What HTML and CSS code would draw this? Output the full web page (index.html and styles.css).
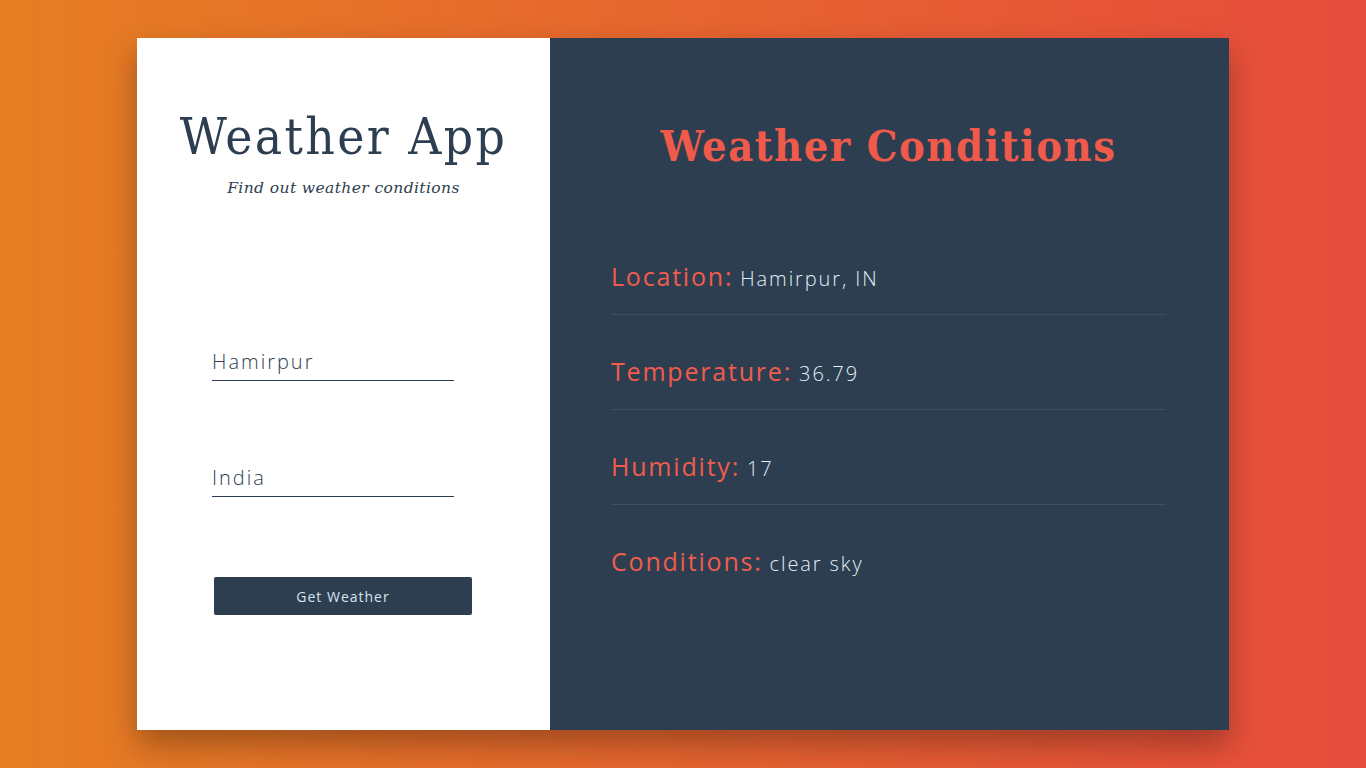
FILE: index.html
```html
<!DOCTYPE html>
<html>
<head>
<meta charset="utf-8">
<link rel="stylesheet" href="styles.css">
</head>
<body>
<div class="card">
  <section class="side">
    <h1 class="app-title">Weather App</h1>
    <p class="app-sub">Find out weather conditions</p>
    <form class="form">
      <div class="field"><span class="field-text">Hamirpur</span></div>
      <div class="field"><span class="field-text">India</span></div>
      <button type="button" class="btn">Get Weather</button>
    </form>
  </section>
  <section class="main">
    <h2 class="main-title">Weather Conditions</h2>
    <div class="rows">
      <div class="row"><span class="label">Location:</span><span class="value">Hamirpur, IN</span></div>
      <div class="row"><span class="label">Temperature:</span><span class="value">36.79</span></div>
      <div class="row"><span class="label">Humidity:</span><span class="value">17</span></div>
      <div class="row last"><span class="label">Conditions:</span><span class="value">clear sky</span></div>
    </div>
  </section>
</div>
</body>
</html>
```
FILE: styles.css
```css
html, body {
  margin: 0;
  padding: 0;
}
body {
  width: 1366px;
  height: 768px;
  overflow: hidden;
  background: linear-gradient(to right, #e67e22, #e74c3c);
  font-family: "Open Sans", sans-serif;
  padding-top: 38px;
  box-sizing: border-box;
}
.card {
  width: 1092px;
  height: 692px;
  margin: 0 auto;
  display: flex;
  box-shadow: 0 15px 30px rgba(0, 0, 0, 0.3);
}
.side {
  width: 413px;
  background: #fff;
  box-sizing: border-box;
  padding-top: 69px;
}
.app-title {
  margin: 0;
  text-align: center;
  font-family: "DejaVu Serif Condensed", "DejaVu Serif", serif;
  font-weight: 400;
  font-size: 51px;
  line-height: 60px;
  letter-spacing: 2.4px;
  color: #2c3e50;
}
.app-sub {
  margin: 12px 0 0;
  text-align: center;
  font-family: "DejaVu Serif", serif;
  font-style: italic;
  font-size: 15.5px;
  color: #2c3e50;
  letter-spacing: 0.4px;
}
.form {
  padding-left: 75px;
  margin-top: 150px;
}
.field {
  width: 242px;
  height: 34px;
  border-bottom: 1px solid #2c3e50;
  box-sizing: border-box;
  margin-bottom: 82px;
}
.field-text {
  font-family: "Open Sans", sans-serif;
  font-weight: 300;
  font-size: 20px;
  letter-spacing: 2px;
  color: #2c3e50;
  line-height: 30px;
}
.btn {
  display: block;
  margin-left: 2px;
  margin-top: -2px;
  width: 258px;
  height: 38px;
  border: none;
  border-radius: 2px;
  background: #2c3e50;
  color: #d8e2ec;
  font-family: "Open Sans", sans-serif;
  font-weight: 400;
  font-size: 14px;
  letter-spacing: 1px;
}
.main {
  flex: 1;
  background: #2c3e50;
  padding: 83px 63px 0 61px;
}
.main-title {
  margin: 0;
  text-align: center;
  font-family: "DejaVu Serif Condensed", "DejaVu Serif", serif;
  font-weight: 700;
  font-size: 43px;
  line-height: 50px;
  letter-spacing: 1.5px;
  color: #f05a4b;
}
.rows {
  margin-top: 49px;
}
.row {
  height: 55px;
  padding-top: 39px;
  border-bottom: 1px solid #3c4f63;
  display: flex;
  align-items: baseline;
  gap: 7px;
}
.row.last {
  border-bottom: none;
}
.label {
  font-family: "Open Sans", sans-serif;
  font-weight: 400;
  font-size: 25px;
  line-height: 34px;
  letter-spacing: 1.8px;
  color: #f15c4d;
}
.value {
  font-family: "Open Sans", sans-serif;
  font-weight: 300;
  font-size: 20px;
  letter-spacing: 1.9px;
  color: #e2eef8;
}
```
